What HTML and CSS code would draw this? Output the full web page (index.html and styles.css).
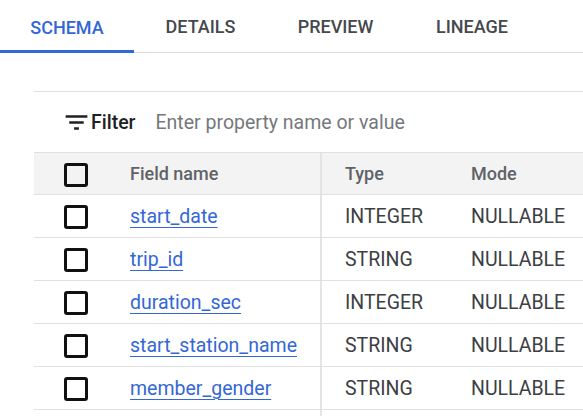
FILE: index.html
```html
<!DOCTYPE html>
<html>
<head>
<meta charset="utf-8">
<link rel="stylesheet" href="styles.css">
</head>
<body>
<div class="tabs">
  <div class="tab active t1">SCHEMA</div>
  <div class="tab t2">DETAILS</div>
  <div class="tab t3">PREVIEW</div>
  <div class="tab t4">LINEAGE</div>
</div>
<div class="content">
  <div class="filter">
    <svg class="ficon" viewBox="0 0 24 24" width="29" height="29"><path d="M10 18h4v-2h-4v2zM3 6v2h18V6H3zm3 7h12v-2H6v2z" fill="#202124"/></svg>
    <span class="flabel">Filter</span>
    <span class="fplace">Enter property name or value</span>
  </div>
  <div class="table">
    <div class="row head">
      <div class="c1"><span class="cb"></span></div>
      <div class="c2">Field name</div>
      <div class="c3">Type</div>
      <div class="c4">Mode</div>
    </div>
    <div class="row">
      <div class="c1"><span class="cb"></span></div>
      <div class="c2"><a class="link">start_date</a></div>
      <div class="c3">INTEGER</div>
      <div class="c4">NULLABLE</div>
    </div>
    <div class="row">
      <div class="c1"><span class="cb"></span></div>
      <div class="c2"><a class="link">trip_id</a></div>
      <div class="c3">STRING</div>
      <div class="c4">NULLABLE</div>
    </div>
    <div class="row">
      <div class="c1"><span class="cb"></span></div>
      <div class="c2"><a class="link">duration_sec</a></div>
      <div class="c3">INTEGER</div>
      <div class="c4">NULLABLE</div>
    </div>
    <div class="row">
      <div class="c1"><span class="cb"></span></div>
      <div class="c2"><a class="link">start_station_name</a></div>
      <div class="c3">STRING</div>
      <div class="c4">NULLABLE</div>
    </div>
    <div class="row">
      <div class="c1"><span class="cb"></span></div>
      <div class="c2"><a class="link">member_gender</a></div>
      <div class="c3">STRING</div>
      <div class="c4">NULLABLE</div>
    </div>
    <div class="row tail">
      <div class="c1"></div>
      <div class="c2"></div>
      <div class="c3"></div>
      <div class="c4"></div>
    </div>
  </div>
</div>
</body>
</html>
```
FILE: styles.css
```css
html, body {
  margin: 0;
  padding: 0;
  background: #fff;
  font-family: Roboto, "Liberation Sans", sans-serif;
  overflow: hidden;
}
.tabs {
  display: flex;
  height: 53px;
  border-bottom: 1px solid #dadce0;
  box-sizing: border-box;
}
.tab {
  display: flex;
  align-items: center;
  justify-content: center;
  font-size: 18px;
  font-weight: 500;
  color: #45484c;
  box-sizing: border-box;
  padding-top: 1px;
}
.t1 { width: 134px; }
.t2 { width: 133px; }
.t3 { width: 137px; }
.t4 { width: 136px; }
.tab.active {
  color: #3367d6;
  border-bottom: 3px solid #3367d6;
  margin-bottom: -1px;
  padding-top: 4px;
}
.content {
  margin-top: 38px;
  margin-left: 34px;
}
.filter {
  border-top: 1px solid #e0e0e0;
  height: 60px;
  display: flex;
  align-items: center;
  padding-left: 28px;
}
.ficon {
  display: block;
}
.flabel {
  font-size: 19.5px;
  font-weight: 500;
  color: #202124;
  margin-right: 20px;
}
.fplace {
  font-size: 19.5px;
  color: #75787c;
}
.table {
  border-top: 1px solid #e0e0e0;
}
.row {
  display: grid;
  grid-template-columns: 96px 192px 149px 1fr;
  height: 43px;
  border-bottom: 1px solid #e0e0e0;
  box-sizing: border-box;
  font-size: 19.5px;
  color: #3c4043;
}
.row > div {
  display: flex;
  align-items: center;
}
.head {
  background: #f3f3f3;
  height: 42px;
  color: #5f6368;
  font-weight: 500;
  font-size: 18px;
}
.c1 {
  padding-left: 30px;
}
.c2 {
  border-right: 2px solid #e4e4e4;
}
.c3 {
  padding-left: 23px;
}
.cb {
  display: block;
  width: 24px;
  height: 24px;
  box-sizing: border-box;
  border: 3px solid #111;
  border-radius: 3px;
  margin-top: 2px;
}
.link {
  color: #3367d6;
  text-decoration: underline;
  text-underline-offset: 4px;
  text-decoration-thickness: 1px;
}
.tail {
  height: 6px;
  border-bottom: none;
}
```
